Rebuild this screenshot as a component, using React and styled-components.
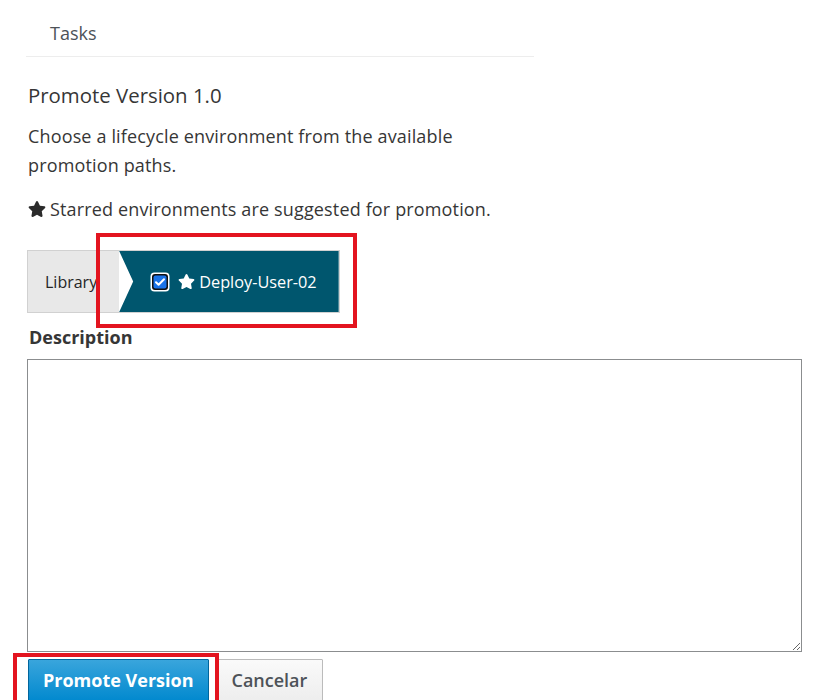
import React from "react"
import styled, { createGlobalStyle } from "styled-components"

const GlobalStyle = createGlobalStyle`
  body {
    margin: 0;
    background: #fff;
    font-family: "Open Sans", "Liberation Sans", sans-serif;
    color: #363636;
  }
`

const Page = styled.div`
  padding: 0 15px 0 27px;
`

const TopColumn = styled.div`
  width: 507px;
`

const TabBar = styled.div`
  display: flex;
  height: 56px;
  margin-left: -1px;
  border-bottom: 1px solid #ededed;
`

const Tab = styled.span`
  display: flex;
  align-items: center;
  padding: 10px 0 0 24px;
  font-size: 18px;
  color: #4d5258;
`

const Heading = styled.h2`
  margin: 24px 0 0 1px;
  font-size: 20.4px;
  font-weight: 400;
  line-height: 28px;
  color: #363636;
`

const Text = styled.p`
  margin: ${(p) => p.$mt || 0}px 0 0 1px;
  font-size: 18px;
  letter-spacing: 0.15px;
  line-height: 29px;
  color: #363636;
`

const StarIcon = styled.svg`
  width: ${(p) => p.$size}px;
  height: ${(p) => p.$size}px;
  fill: ${(p) => p.$color};
  vertical-align: ${(p) => p.$align || "-2px"};
  margin-right: 4px;
`

const PathBar = styled.div`
  display: inline-flex;
  margin-top: 26px;
  border: 1px solid #d1d1d1;
  height: 61px;
`

const PathItem = styled.div`
  display: flex;
  align-items: center;
  font-size: 16px;
  padding: 0 22px 0 17px;
  background: #e8e8e8;
  color: #252525;
`

const Marked = styled.div`
  position: relative;
  display: flex;
`

const ActivePathItem = styled.div`
  display: flex;
  align-items: center;
  gap: 8px;
  padding: 0 22px 0 31px;
  background: #00566e;
  color: #fff;
  font-size: 16.3px;
  clip-path: polygon(0 0, 100% 0, 100% 100%, 0 100%, 14px 50%);
`

const Annotation = styled.div`
  position: absolute;
  top: ${(p) => p.$top}px;
  left: ${(p) => p.$left}px;
  right: ${(p) => p.$right}px;
  bottom: ${(p) => p.$bottom}px;
  border: 4px solid #e3141f;
  pointer-events: none;
`

const Label = styled.label`
  display: block;
  margin: 11px 0 0 2px;
  font-size: 18px;
  font-weight: 700;
  line-height: 26px;
  color: #363636;
`

const TextArea = styled.textarea`
  display: block;
  box-sizing: border-box;
  width: 775px;
  height: 293px;
  margin-top: 9px;
  border: 1px solid #8b8d8f;
  resize: vertical;
  font-family: inherit;
`

const Actions = styled.div`
  display: flex;
  gap: 7px;
  margin-top: 7px;
  padding-left: 1px;
`

const ButtonWrap = styled.div`
  position: relative;
  display: flex;
`

const Button = styled.button`
  height: 44px;
  padding: 0 ${(p) => (p.$primary ? 14 : 15)}px 3px;
  font-family: inherit;
  font-size: 18px;
  font-weight: ${(p) => (p.$primary ? 700 : 600)};
  border: 1px solid ${(p) => (p.$primary ? "#00659c" : "#bbb")};
  border-radius: 1px;
  color: ${(p) => (p.$primary ? "#fff" : "#4d5258")};
  background: ${(p) =>
    p.$primary
      ? "linear-gradient(#39a5dc, #0088ce)"
      : "linear-gradient(#fafafa, #ededed)"};
`

const starPath =
  "M259.3 17.8L194 150.2 47.9 171.5c-26.2 3.8-36.7 36.1-17.7 54.6l105.7 103-25 145.5c-4.5 26.3 23.2 46 46.4 33.7L288 439.6l130.7 68.7c23.2 12.2 50.9-7.4 46.4-33.7l-25-145.5 105.7-103c19-18.5 8.5-50.8-17.7-54.6L382 150.2 316.7 17.8c-11.7-23.6-45.6-23.9-57.4 0z"

function Star({ size, color, align }) {
  return (
    <StarIcon viewBox="0 0 576 512" $size={size} $color={color} $align={align}>
      <path d={starPath} />
    </StarIcon>
  )
}

function CheckBox() {
  return (
    <svg width="20" height="20" viewBox="0 0 20 20">
      <rect x="0.5" y="0.5" width="19" height="19" rx="4" fill="#fff" />
      <rect x="2" y="2" width="16" height="16" rx="3" fill="#101010" />
      <rect x="3.5" y="3.5" width="13" height="13" rx="2" fill="#1a73e8" />
      <path
        d="M6 10.2l2.6 2.6L14 7.2"
        fill="none"
        stroke="#fff"
        strokeWidth="2"
        strokeLinecap="round"
        strokeLinejoin="round"
      />
    </svg>
  )
}

export default function App() {
  return (
    <>
      <GlobalStyle />
      <Page>
        <TopColumn>
          <TabBar>
            <Tab>Tasks</Tab>
          </TabBar>
          <Heading>Promote Version 1.0</Heading>
          <Text $mt={13}>
            Choose a lifecycle environment from the available promotion paths.
          </Text>
          <Text $mt={15}>
            <Star size={18} color="#2b2b2b" />
            Starred environments are suggested for promotion.
          </Text>
        </TopColumn>
        <PathBar>
          <PathItem>Library</PathItem>
          <Marked>
            <ActivePathItem>
              <CheckBox />
              <span>
                <Star size={17} color="#fff" align="-2px" />
                Deploy-User-02
              </span>
            </ActivePathItem>
            <Annotation $top={-18} $left={-23} $right={-18} $bottom={-16} />
          </Marked>
        </PathBar>
        <Label>Description</Label>
        <TextArea />
        <Actions>
          <ButtonWrap>
            <Button $primary>Promote Version</Button>
            <Annotation $top={-6} $left={-15} $right={-10} $bottom={-10} />
          </ButtonWrap>
          <Button>Cancelar</Button>
        </Actions>
      </Page>
    </>
  )
}
